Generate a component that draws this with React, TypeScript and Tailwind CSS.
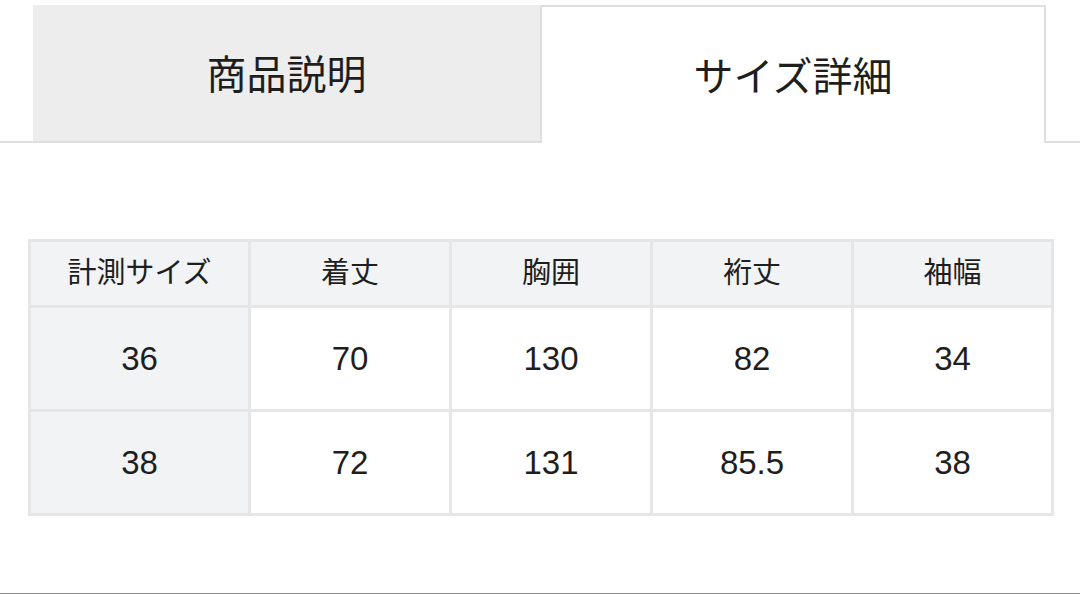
import React from "react";

const font = { fontFamily: '"Liberation Sans", "Noto Sans CJK JP", sans-serif' };

const headers = ["計測サイズ", "着丈", "胸囲", "裄丈", "袖幅"];
const rows = [
  ["36", "70", "130", "82", "34"],
  ["38", "72", "131", "85.5", "38"],
];
const widths = ["w-[220px]", "w-[201px]", "w-[201px]", "w-[201px]", "w-[200px]"];

export default function App() {
  return (
    <div className="w-[1080px] h-[594px] bg-white text-[#1e1e1e] border-b border-[#8a8a8a] flex flex-col" style={font}>
      <div className="flex pt-[5px] h-[143px]">
        <div className="w-[33px] border-b-2 border-[#dedede]" />
        <div className="w-[507px] bg-[#ededed] border-b-2 border-[#dedede] flex items-center justify-center pt-[3px]">
          <span className="text-[40px] leading-none">商品説明</span>
        </div>
        <div className="w-[506px] bg-white border-2 border-b-0 border-[#dedede] flex items-center justify-center pt-[3px]">
          <span className="text-[40px] leading-none">サイズ詳細</span>
        </div>
        <div className="flex-1 border-b-2 border-[#dedede]" />
      </div>
      <div className="pt-[96px] pl-[28px]">
        <table className="border-collapse table-fixed w-[1023px]">
          <thead>
            <tr className="h-[66px]">
              {headers.map((h, i) => (
                <th key={i} className={`${widths[i]} border-[3px] border-[#e6e6e6] bg-[#f2f3f5] font-normal text-[29px] text-center align-middle`}>
                  {h}
                </th>
              ))}
            </tr>
          </thead>
          <tbody>
            {rows.map((r, ri) => (
              <tr key={ri} className="h-[104px]">
                {r.map((c, ci) => (
                  <td key={ci} className={`border-[3px] border-[#e6e6e6] text-[33px] text-center align-middle ${ci === 0 ? "bg-[#f2f3f5]" : "bg-white"}`}>
                    {c}
                  </td>
                ))}
              </tr>
            ))}
          </tbody>
        </table>
      </div>
    </div>
  );
}
